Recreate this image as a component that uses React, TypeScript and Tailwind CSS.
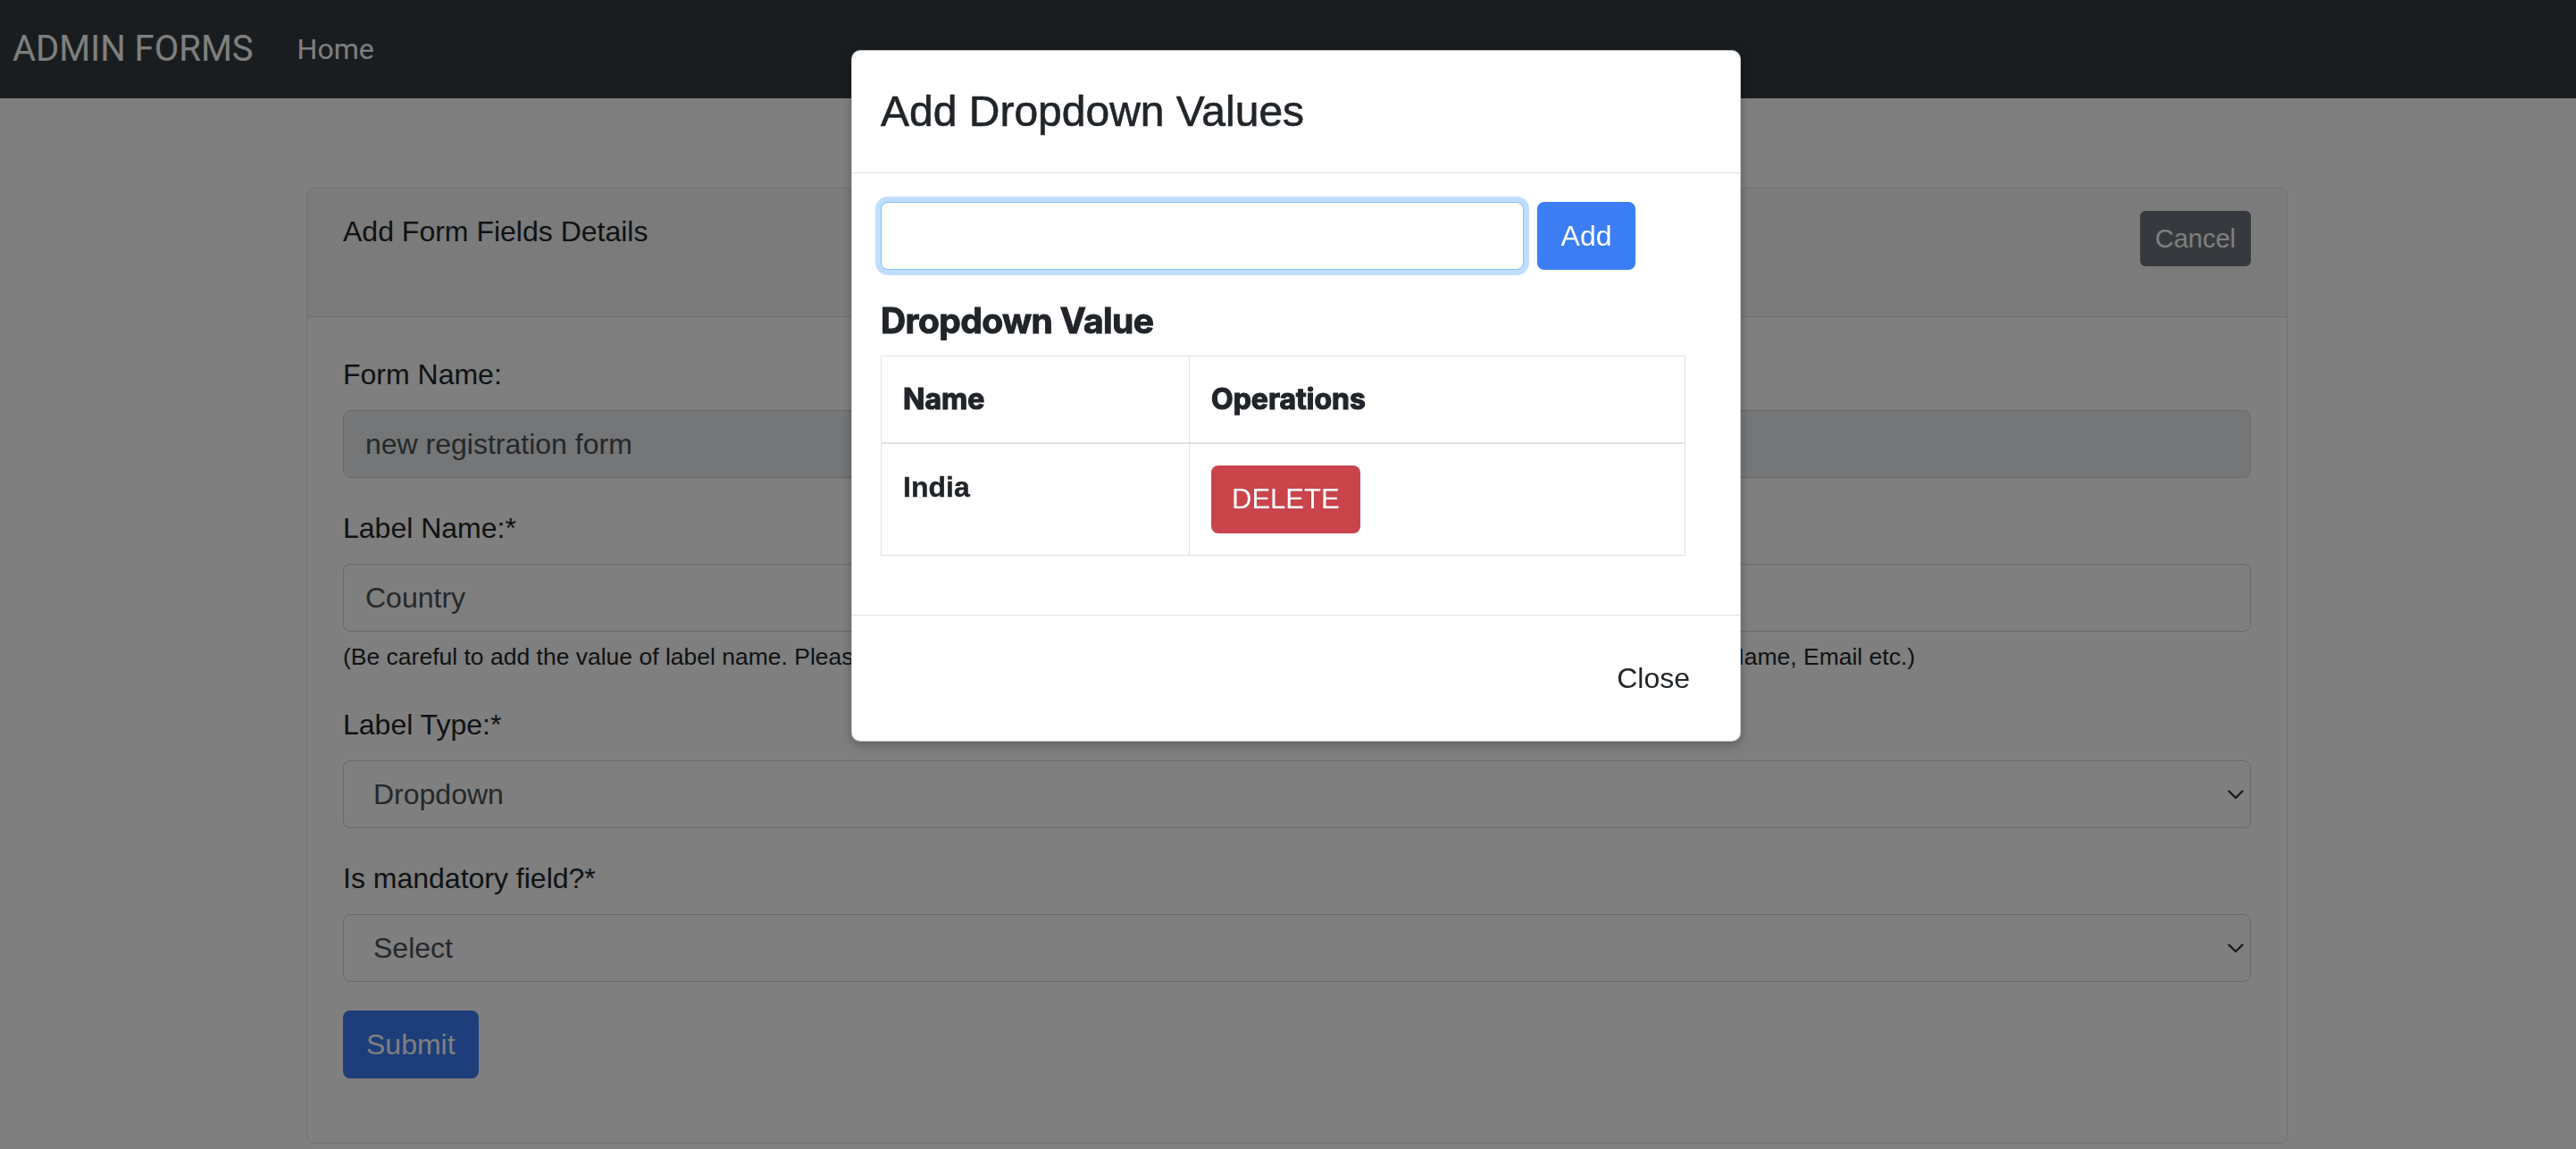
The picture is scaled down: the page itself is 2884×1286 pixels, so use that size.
import React from "react";

function Chevron() {
  return (
    <svg width="18" height="11" viewBox="0 0 18 11" fill="none" className="shrink-0">
      <path d="M1.5 1.5 L9 9 L16.5 1.5" stroke="#333333" strokeWidth="2.4" strokeLinecap="round" strokeLinejoin="round" />
    </svg>
  );
}

function Label({ children }: { children: React.ReactNode }) {
  return <div className="text-[32px] leading-[48px] mb-[16px] text-[#212529]">{children}</div>;
}

function SelectBox({ value }: { value: string }) {
  return (
    <div className="h-[76px] border border-[#ced4da] rounded-[8px] bg-white flex items-center justify-between pl-[33px] pr-[7px] text-[32px] text-[#495057]">
      <span>{value}</span>
      <Chevron />
    </div>
  );
}

export default function App() {
  return (
    <div className="relative h-[1286px] overflow-hidden bg-white font-['Liberation_Sans',Arial,sans-serif] text-[#212529]">
      {/* Navbar */}
      <nav className="h-[110px] bg-[#343a40] flex items-center pl-[14px] font-['Roboto',sans-serif]">
        <span className="text-[40px] leading-[60px] text-white">ADMIN FORMS</span>
        <span className="ml-[49px] text-[32px] leading-[48px] text-white">Home</span>
      </nav>

      {/* Page content */}
      <main className="pt-[100px] pl-[343px] pr-[323px]">
        <div className="border border-[#e0e0e0] rounded-[8px] bg-white">
          <div className="h-[144px] border-b border-[#e0e0e0] bg-[#f7f7f7] rounded-t-[8px] px-[40px] pt-[24px] flex justify-between items-start">
            <span className="text-[32px] leading-[48px]">Add Form Fields Details</span>
            <button className="mt-[1px] h-[62px] px-[17px] rounded-[6px] bg-[#6c757d] text-white text-[29px] leading-[42px]">Cancel</button>
          </div>
          <div className="px-[40px] pt-[40px] pb-[72px]">
            <div className="mb-[32px]">
              <Label>Form Name:</Label>
              <div className="h-[76px] border border-[#ced4da] rounded-[8px] bg-[#e9ecef] flex items-center px-[24px] text-[32px] text-[#495057]">
                new registration form
              </div>
            </div>
            <div className="mb-[32px]">
              <Label>Label Name:*</Label>
              <div className="h-[76px] border border-[#ced4da] rounded-[8px] bg-white flex items-center px-[24px] text-[32px] text-[#495057]">
                Country
              </div>
              <div className="mt-[8px] text-[26.5px] leading-[40px] text-[#212529] whitespace-nowrap">
                (Be careful to add the value of label name. Please enter the same label name as it is used in the form, for example First Name, Last Name, Email etc.)
              </div>
            </div>
            <div className="mb-[32px]">
              <Label>Label Type:*</Label>
              <SelectBox value="Dropdown" />
            </div>
            <div className="mb-[32px]">
              <Label>Is mandatory field?*</Label>
              <SelectBox value="Select" />
            </div>
            <button className="h-[76px] px-[26px] rounded-[8px] bg-[#3b7df5] text-white text-[32px]">Submit</button>
          </div>
        </div>
      </main>

      {/* Backdrop */}
      <div className="fixed inset-0 bg-black/50" />

      {/* Modal */}
      <div className="absolute z-50 left-[953px] top-[56px] w-[996px] bg-white rounded-[10px] border border-black/20 shadow-[0_4px_12px_rgba(0,0,0,0.25)]">
        <div className="p-[32px] border-b border-[#dee2e6]">
          <div className="text-[48px] leading-[72px] text-[#212529] [-webkit-text-stroke:0.6px_#212529]">Add Dropdown Values</div>
        </div>
        <div className="px-[32px] pt-[32px] pb-[34px]">
          <div className="flex items-center gap-[15px]">
            <div className="w-[720px] h-[76px] border border-[#80bdff] rounded-[8px] bg-white shadow-[0_0_0_6px_rgba(0,123,255,0.25)]" />
            <button className="h-[76px] w-[110px] rounded-[8px] bg-[#3b7df5] text-white text-[32px]">Add</button>
          </div>
          <div className="mt-[33px] mb-[15px] text-[39px] leading-[48px] font-bold text-[#212529] font-['Inter',sans-serif] tracking-[-0.6px] [-webkit-text-stroke:1px_#212529]">
            Dropdown Value
          </div>
          <table className="w-[901px] border-collapse mb-[32px]">
            <thead>
              <tr>
                <th className="w-[345px] border border-[#dee2e6] border-b-2 p-[24px] text-left align-top text-[32px] leading-[48px] font-bold font-['Inter',sans-serif] text-[#212529] [-webkit-text-stroke:1.2px_#212529]">Name</th>
                <th className="border border-[#dee2e6] border-b-2 p-[24px] text-left align-top text-[32px] leading-[48px] font-bold font-['Inter',sans-serif] text-[#212529] [-webkit-text-stroke:1.2px_#212529]">Operations</th>
              </tr>
            </thead>
            <tbody>
              <tr>
                <td className="border border-[#dee2e6] p-[24px] align-top text-[32px] leading-[48px] font-bold text-[#212529] [-webkit-text-stroke:0.4px_#212529]">India</td>
                <td className="border border-[#dee2e6] p-[24px] align-top">
                  <button className="h-[76px] px-[23px] rounded-[8px] bg-[#ca444c] text-white text-[31px]">DELETE</button>
                </td>
              </tr>
            </tbody>
          </table>
        </div>
        <div className="border-t border-[#dee2e6] p-[24px] flex justify-end">
          <button className="m-[8px] h-[76px] px-[24px] text-[32px] text-[#212529]">Close</button>
        </div>
      </div>
    </div>
  );
}
